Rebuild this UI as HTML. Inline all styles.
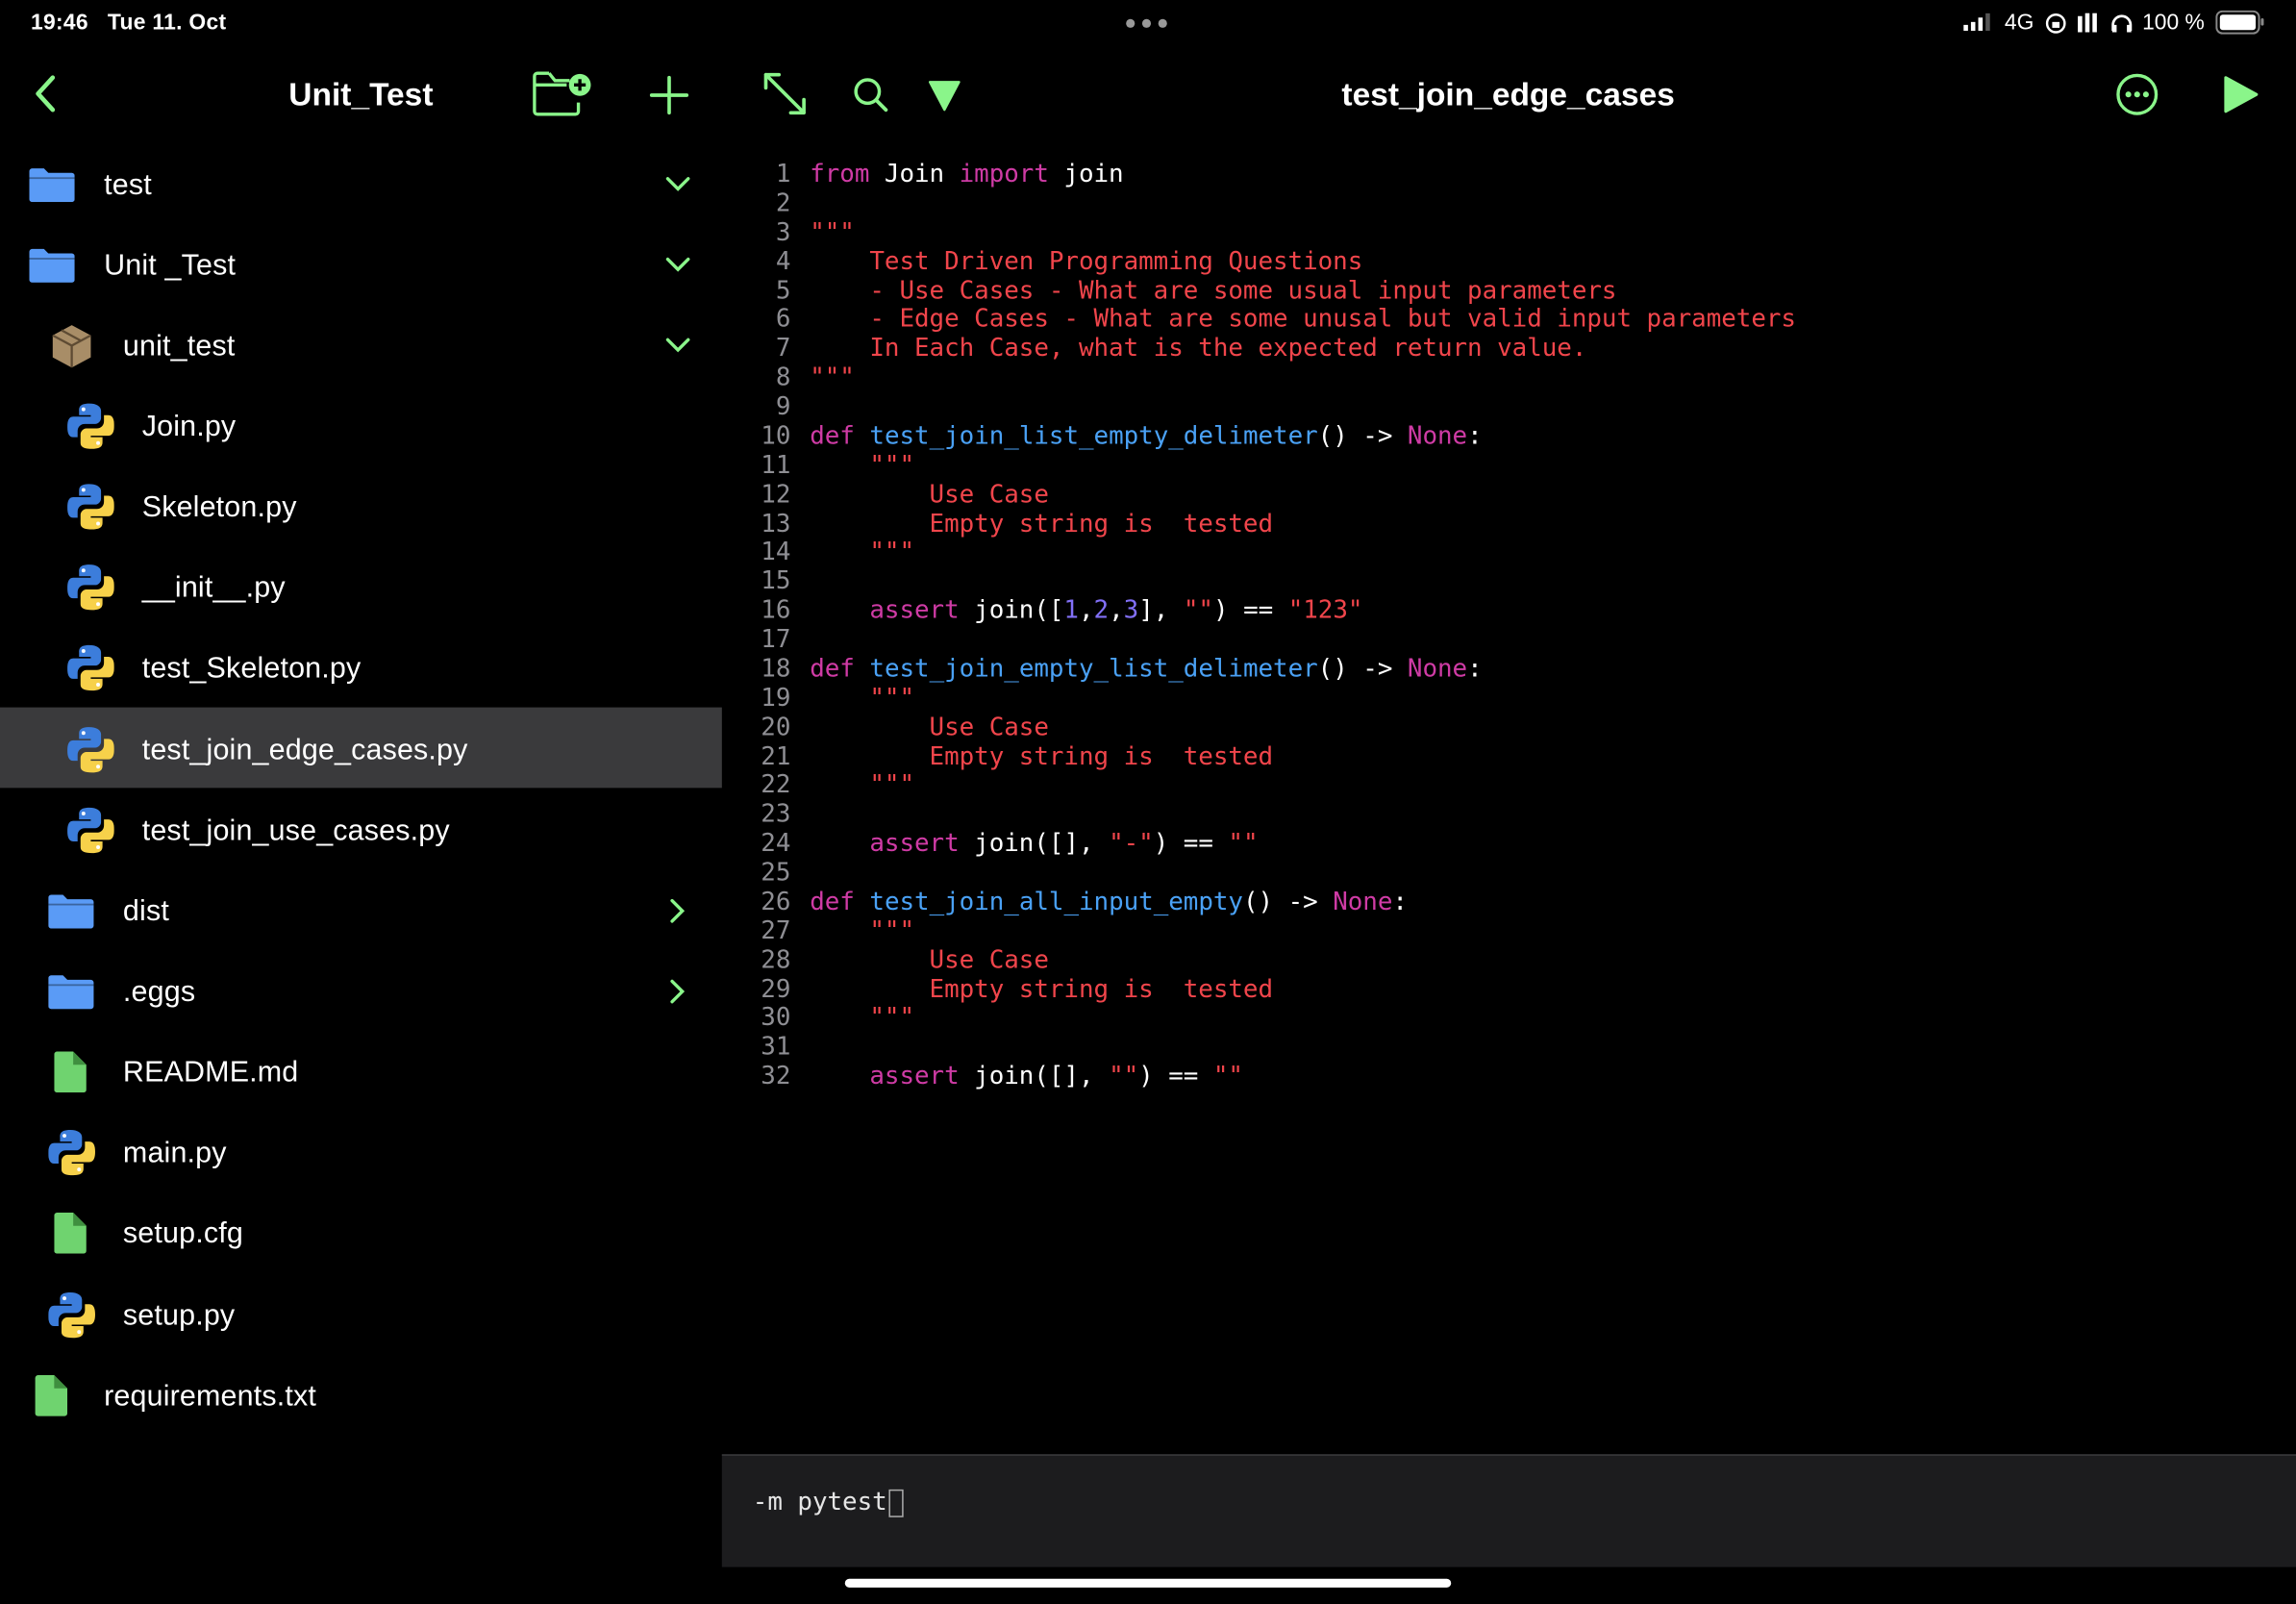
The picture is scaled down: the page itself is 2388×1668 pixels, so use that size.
<!DOCTYPE html>
<html><head><meta charset="utf-8"><style>
html,body{margin:0;padding:0;background:#000;overflow:hidden;width:2388px;height:1668px}
#w{position:absolute;left:0;top:0;width:1568px;height:1095px;transform:scale(1.52296);transform-origin:0 0;background:#000;color:#fff;font-family:"Liberation Sans",sans-serif}
.a{position:absolute}
.row{position:absolute;left:0;width:493px;height:55px}
.row .t{position:absolute;top:calc(50% + 2px);transform:translateY(-50%);font-size:20px;color:#fff;white-space:nowrap;letter-spacing:0.1px}
.row svg{position:absolute;top:calc(50% + 1px);transform:translateY(-50%)}
.chev{position:absolute;left:454px}
pre{margin:0;font-family:"DejaVu Sans Mono","Liberation Mono",monospace;font-size:17px;line-height:19.87px;letter-spacing:-0.03px}
.k{color:#cf3ba5}.c{color:#f0454b}.f{color:#4aa1f5}.n{color:#8270f7}.g{color:#8e8e93}
</style></head><body><div id="w">
<!-- status bar -->
<div class="a" style="left:21px;top:7px;font-size:15px;font-weight:bold;letter-spacing:0.2px">19:46&nbsp;&nbsp; Tue 11. Oct</div>
<div class="a" style="left:769px;top:13px;width:30px;height:6px">
<span class="a" style="left:0;width:6px;height:6px;border-radius:3px;background:#999"></span>
<span class="a" style="left:11px;width:6px;height:6px;border-radius:3px;background:#999"></span>
<span class="a" style="left:22px;width:6px;height:6px;border-radius:3px;background:#999"></span></div>
<svg class="a" style="left:1340px;top:9px" width="22" height="13"><rect x="1" y="8" width="3" height="4" fill="#fff"/><rect x="6" y="6" width="3" height="6" fill="#fff"/><rect x="11" y="3" width="3" height="9" fill="#fff"/><rect x="16" y="0" width="3" height="12" fill="#555"/></svg>
<div class="a" style="left:1369px;top:7px;font-size:15px">4G</div>
<svg class="a" style="left:1396px;top:8px" width="16" height="16"><circle cx="8" cy="8" r="6" fill="none" stroke="#fff" stroke-width="1.6"/><rect x="5.5" y="7" width="5" height="4" fill="#fff"/></svg>
<svg class="a" style="left:1418px;top:8px" width="18" height="16"><rect x="1" y="3" width="3" height="11" fill="#fff"/><rect x="6" y="1" width="3" height="13" fill="#fff"/><rect x="11" y="1" width="3" height="13" fill="#fff"/></svg>
<svg class="a" style="left:1441px;top:8px" width="16" height="16"><path d="M2 13V9a6 6 0 0 1 12 0v4" fill="none" stroke="#fff" stroke-width="1.8"/><rect x="1.5" y="9" width="3" height="5" fill="#fff"/><rect x="11.5" y="9" width="3" height="5" fill="#fff"/></svg>
<div class="a" style="left:1463px;top:7px;font-size:15px">100 %</div>
<svg class="a" style="left:1513px;top:7px" width="34" height="17"><rect x="0.75" y="0.75" width="29" height="15" rx="4" fill="none" stroke="#888" stroke-width="1.3"/><rect x="3" y="3" width="24.5" height="10.5" rx="2" fill="#fff"/><rect x="31" y="5.5" width="2" height="5" rx="1" fill="#888"/></svg>

<!-- sidebar header -->
<svg class="a" style="left:20px;top:50px" width="22" height="28"><path d="M16 3L6 14l10 11" fill="none" stroke="#8af58a" stroke-width="3" stroke-linecap="round" stroke-linejoin="round"/></svg>
<div class="a" style="left:0;width:493px;text-align:center;top:52px;font-size:22px;font-weight:bold">Unit_Test</div>
<svg class="a" style="left:363px;top:48px" width="42" height="32"><path d="M12 2H4a2 2 0 0 0-2 2v24a2 2 0 0 0 2 2h26a2 2 0 0 0 2-2V22M2 10h22M12 2l4 5h10" fill="none" stroke="#8af58a" stroke-width="2.2"/><circle cx="33" cy="10" r="7.5" fill="#8af58a"/><path d="M33 6v8M29 10h8" stroke="#000" stroke-width="2.2"/></svg>
<svg class="a" style="left:443px;top:51px" width="28" height="28"><path d="M14 2v24M2 14h24" stroke="#8af58a" stroke-width="2.4" stroke-linecap="round"/></svg>

<!-- sidebar rows -->
<div class="row" style="top:97px"><svg style="left:20px" width="31" height="24"><path d="M0 3a2 2 0 0 1 2-2h8l3 3h16a2 2 0 0 1 2 2v16a2 2 0 0 1-2 2H2a2 2 0 0 1-2-2z" fill="#5a9bf6"/><rect x="0" y="7" width="31" height="1.2" fill="#000" opacity=".35"/></svg><div class="t" style="left:71px">test</div>
<svg class="chev" width="18" height="12"><path d="M2 2l7 7 7-7" fill="none" stroke="#8af58a" stroke-width="2.2" stroke-linecap="round"/></svg></div>
<div class="row" style="top:152px"><svg style="left:20px" width="31" height="24"><path d="M0 3a2 2 0 0 1 2-2h8l3 3h16a2 2 0 0 1 2 2v16a2 2 0 0 1-2 2H2a2 2 0 0 1-2-2z" fill="#5a9bf6"/><rect x="0" y="7" width="31" height="1.2" fill="#000" opacity=".35"/></svg><div class="t" style="left:71px">Unit _Test</div>
<svg class="chev" width="18" height="12"><path d="M2 2l7 7 7-7" fill="none" stroke="#8af58a" stroke-width="2.2" stroke-linecap="round"/></svg></div>
<div class="row" style="top:207px"><svg style="left:35px" width="28" height="30"><path d="M14 1L27 8v15l-13 7L1 23V8z" fill="#a88d67"/><path d="M1 8l13 7 13-7M14 15v15M7 4.5l13 7" fill="none" stroke="#5e4b33" stroke-width="1.5"/></svg><div class="t" style="left:84px">unit_test</div>
<svg class="chev" width="18" height="12"><path d="M2 2l7 7 7-7" fill="none" stroke="#8af58a" stroke-width="2.2" stroke-linecap="round"/></svg></div>

<div class="a" style="left:0;top:483px;width:493px;height:55px;background:#3a3a3c"></div>

<svg width="0" height="0" style="position:absolute"><defs><g id="py"><path d="M15 1c-7 0-7 3-7 5v3h8v1H4c-3 0-4 3-4 7s1 7 4 7h3v-4c0-3 2-5 5-5h7c2 0 4-2 4-4V6c0-3-3-5-8-5z" fill="#3c7ddb"/><circle cx="11" cy="5" r="1.3" fill="#fff"/><path d="M17 32c7 0 7-3 7-5v-3h-8v-1h12c3 0 4-3 4-7s-1-7-4-7h-3v4c0 3-2 5-5 5h-7c-2 0-4 2-4 4v6c0 3 3 4 8 4z" fill="#f7d14a"/><circle cx="21" cy="28" r="1.3" fill="#fff"/></g></defs></svg>

<div class="row" style="top:262px"><svg style="left:46px" width="32" height="33"><use href="#py"/></svg><div class="t" style="left:97px">Join.py</div></div>
<div class="row" style="top:317px"><svg style="left:46px" width="32" height="33"><use href="#py"/></svg><div class="t" style="left:97px">Skeleton.py</div></div>
<div class="row" style="top:372px"><svg style="left:46px" width="32" height="33"><use href="#py"/></svg><div class="t" style="left:97px">__init__.py</div></div>
<div class="row" style="top:427px"><svg style="left:46px" width="32" height="33"><use href="#py"/></svg><div class="t" style="left:97px">test_Skeleton.py</div></div>
<div class="row" style="top:483px"><svg style="left:46px" width="32" height="33"><use href="#py"/></svg><div class="t" style="left:97px">test_join_edge_cases.py</div></div>
<div class="row" style="top:538px"><svg style="left:46px" width="32" height="33"><use href="#py"/></svg><div class="t" style="left:97px">test_join_use_cases.py</div></div>
<div class="row" style="top:593px"><svg style="left:33px" width="31" height="24"><path d="M0 3a2 2 0 0 1 2-2h8l3 3h16a2 2 0 0 1 2 2v16a2 2 0 0 1-2 2H2a2 2 0 0 1-2-2z" fill="#5a9bf6"/><rect x="0" y="7" width="31" height="1.2" fill="#000" opacity=".35"/></svg><div class="t" style="left:84px">dist</div>
<svg class="chev" style="left:457px" width="12" height="18"><path d="M2 2l7 7-7 7" fill="none" stroke="#8af58a" stroke-width="2.2" stroke-linecap="round"/></svg></div>
<div class="row" style="top:648px"><svg style="left:33px" width="31" height="24"><path d="M0 3a2 2 0 0 1 2-2h8l3 3h16a2 2 0 0 1 2 2v16a2 2 0 0 1-2 2H2a2 2 0 0 1-2-2z" fill="#5a9bf6"/><rect x="0" y="7" width="31" height="1.2" fill="#000" opacity=".35"/></svg><div class="t" style="left:84px">.eggs</div>
<svg class="chev" style="left:457px" width="12" height="18"><path d="M2 2l7 7-7 7" fill="none" stroke="#8af58a" stroke-width="2.2" stroke-linecap="round"/></svg></div>
<div class="row" style="top:703px"><svg style="left:37px" width="22" height="28"><path d="M0 2a2 2 0 0 1 2-2h11l9 9v17a2 2 0 0 1-2 2H2a2 2 0 0 1-2-2z" fill="#6fd36f"/><path d="M13 0v9h9" fill="#3f8f3f"/></svg><div class="t" style="left:84px">README.md</div></div>
<div class="row" style="top:758px"><svg style="left:33px" width="32" height="33"><use href="#py"/></svg><div class="t" style="left:84px">main.py</div></div>
<div class="row" style="top:813px"><svg style="left:37px" width="22" height="28"><path d="M0 2a2 2 0 0 1 2-2h11l9 9v17a2 2 0 0 1-2 2H2a2 2 0 0 1-2-2z" fill="#6fd36f"/><path d="M13 0v9h9" fill="#3f8f3f"/></svg><div class="t" style="left:84px">setup.cfg</div></div>
<div class="row" style="top:869px"><svg style="left:33px" width="32" height="33"><use href="#py"/></svg><div class="t" style="left:84px">setup.py</div></div>
<div class="row" style="top:924px"><svg style="left:24px" width="22" height="28"><path d="M0 2a2 2 0 0 1 2-2h11l9 9v17a2 2 0 0 1-2 2H2a2 2 0 0 1-2-2z" fill="#6fd36f"/><path d="M13 0v9h9" fill="#3f8f3f"/></svg><div class="t" style="left:71px">requirements.txt</div></div>

<!-- editor toolbar -->
<svg class="a" style="left:520px;top:48px" width="32" height="32"><path d="M3 3l26 26M3 3h9M3 3v9M29 29h-9M29 29v-9" fill="none" stroke="#8af58a" stroke-width="2.4" stroke-linecap="round"/></svg>
<svg class="a" style="left:582px;top:52px" width="26" height="26"><circle cx="10.5" cy="10.5" r="8" fill="none" stroke="#8af58a" stroke-width="2.3"/><path d="M16.5 16.5l6.5 6.5" stroke="#8af58a" stroke-width="2.5" stroke-linecap="round"/></svg>
<svg class="a" style="left:634px;top:54px" width="22" height="22"><path d="M1 2h20L11 21z" fill="#8af58a" stroke="#8af58a" stroke-linejoin="round" stroke-width="1.5"/></svg>
<div class="a" style="left:820px;width:420px;text-align:center;top:52px;font-size:22px;font-weight:bold">test_join_edge_cases</div>
<svg class="a" style="left:1444px;top:49px" width="31" height="31"><circle cx="15.5" cy="15.5" r="13" fill="none" stroke="#8af58a" stroke-width="2.2"/><circle cx="9.5" cy="15.5" r="2" fill="#8af58a"/><circle cx="15.5" cy="15.5" r="2" fill="#8af58a"/><circle cx="21.5" cy="15.5" r="2" fill="#8af58a"/></svg>
<svg class="a" style="left:1518px;top:51px" width="25" height="27"><path d="M2 2l21 11.5L2 25z" fill="#8af58a" stroke="#8af58a" stroke-linejoin="round" stroke-width="2"/></svg>

<!-- code -->
<pre class="a g" style="left:505px;top:110px;width:35px;text-align:right">1
2
3
4
5
6
7
8
9
10
11
12
13
14
15
16
17
18
19
20
21
22
23
24
25
26
27
28
29
30
31
32</pre>
<pre class="a" style="left:553px;top:110px"><span class="k">from</span> Join <span class="k">import</span> join

<span class="c">"""
    Test Driven Programming Questions
    - Use Cases - What are some usual input parameters
    - Edge Cases - What are some unusal but valid input parameters
    In Each Case, what is the expected return value.
"""</span>

<span class="k">def</span> <span class="f">test_join_list_empty_delimeter</span>() -&gt; <span class="k">None</span>:
    <span class="c">"""
        Use Case
        Empty string is  tested
    """</span>

    <span class="k">assert</span> join([<span class="n">1</span>,<span class="n">2</span>,<span class="n">3</span>], <span class="c">""</span>) == <span class="c">"123"</span>

<span class="k">def</span> <span class="f">test_join_empty_list_delimeter</span>() -&gt; <span class="k">None</span>:
    <span class="c">"""
        Use Case
        Empty string is  tested
    """</span>

    <span class="k">assert</span> join([], <span class="c">"-"</span>) == <span class="c">""</span>

<span class="k">def</span> <span class="f">test_join_all_input_empty</span>() -&gt; <span class="k">None</span>:
    <span class="c">"""
        Use Case
        Empty string is  tested
    """</span>

    <span class="k">assert</span> join([], <span class="c">""</span>) == <span class="c">""</span></pre>

<!-- terminal -->
<div class="a" style="left:493px;top:993px;width:1075px;height:76px;background:#1c1c1e;border-top:1px solid #3a3a3c"></div>
<pre class="a" style="left:514px;top:1017px;color:#e5e5e5">-m pytest</pre>
<div class="a" style="left:607px;top:1017px;width:8px;height:17px;border:1.5px solid #aaa"></div>
<div class="a" style="left:577px;top:1078px;width:414px;height:6px;border-radius:3px;background:#fff"></div>
</div></body></html>
